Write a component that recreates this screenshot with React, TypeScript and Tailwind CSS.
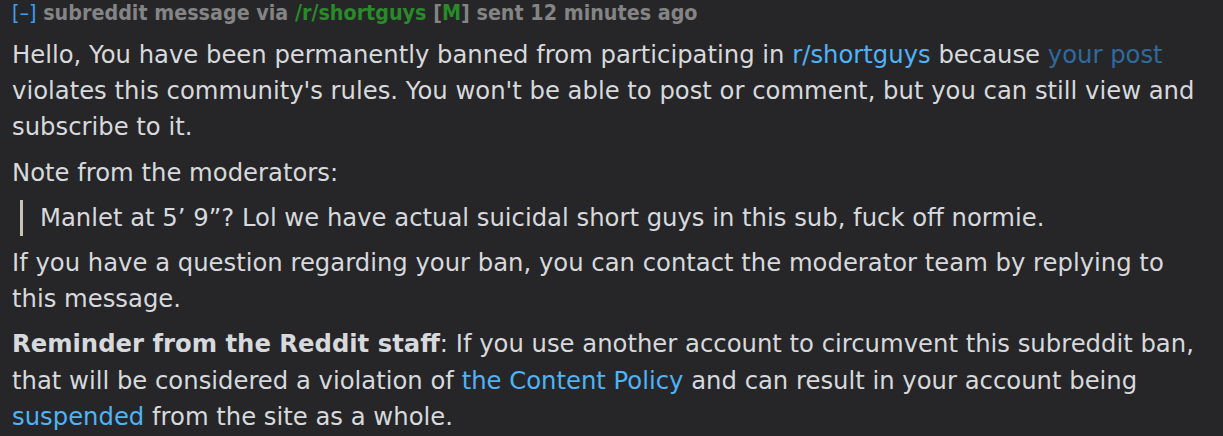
import React from 'react';

export default function App() {
  return (
    <div className="min-h-screen bg-[#262629] px-3 text-[#d7d9dc] font-['DejaVu_Sans',sans-serif]">
      {/* header line */}
      <div className="text-[21.3px] leading-[26px] font-bold text-[#848484] font-['DejaVu_Sans_Condensed','DejaVu_Sans',sans-serif]">
        <span className="font-normal text-[#3a9ff0]">[–]</span> subreddit message via{' '}
        <span className="text-[#2a8a2a]">/r/shortguys</span>{' '}
        [<span className="text-[#2a8a2a]">M</span>] sent 12 minutes ago
      </div>

      <div className="mt-[11px] text-[24.3px] leading-[36.2px]">
        <p className="mb-[9px]">
          Hello, You have been permanently banned from participating in{' '}
          <span className="text-[#4fb3f5]">r/shortguys</span> because{' '}
          <span className="text-[#2f6a9c]">your post</span> violates this community's rules. You won't be able to post
          or comment, but you can still view and subscribe to it.
        </p>
        <p className="mb-[9px]">Note from the moderators:</p>
        <blockquote className="mb-[9px] ml-[8px] border-l-[3px] border-[#c9c4b2] pl-[17px]">
          Manlet at 5’ 9”? Lol we have actual suicidal short guys in this sub, fuck off normie.
        </blockquote>
        <p className="mb-[9px]">
          If you have a question regarding your ban, you can contact the moderator team by replying to this message.
        </p>
        <p>
          <strong className="font-bold">Reminder from the Reddit staff</strong>: If you use another account to
          circumvent this subreddit ban, that will be considered a violation of{' '}
          <span className="text-[#4fb3f5]">the Content Policy</span> and can result in your account being{' '}
          <span className="text-[#4fb3f5]">suspended</span> from the site as a whole.
        </p>
      </div>
    </div>
  );
}
